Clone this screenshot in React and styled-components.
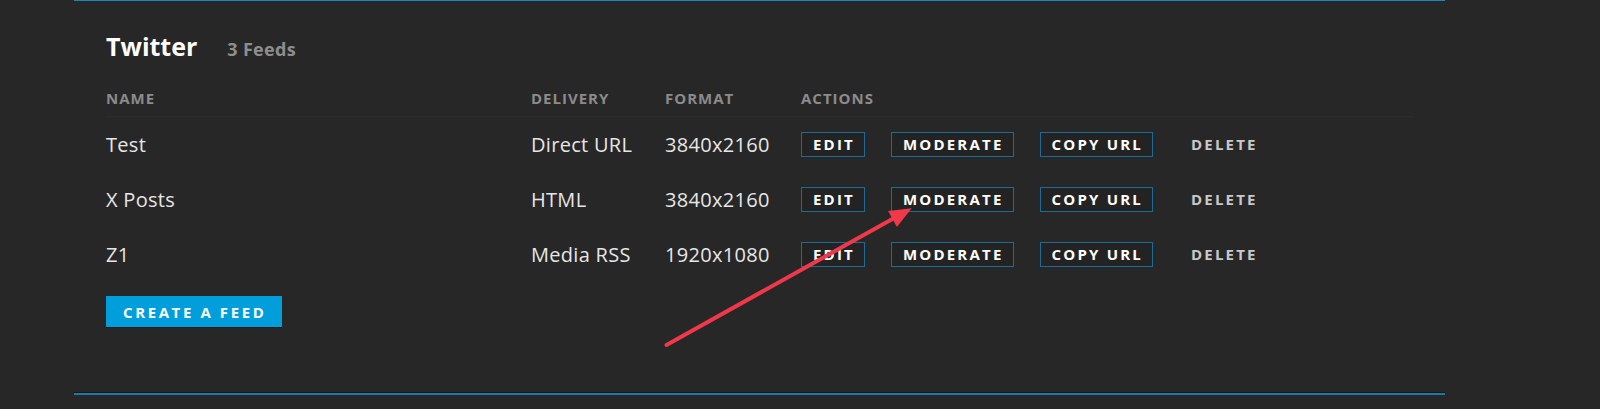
import React from 'react'
import styled, { createGlobalStyle } from 'styled-components'

const GlobalStyle = createGlobalStyle`
  html, body {
    margin: 0;
    padding: 0;
    background: #272727;
  }
  body {
    font-family: "Open Sans", "Liberation Sans", sans-serif;
    color: #e6e6e6;
  }
`

const feeds = [
  { name: 'Test', delivery: 'Direct URL', format: '3840x2160' },
  { name: 'X Posts', delivery: 'HTML', format: '3840x2160' },
  { name: 'Z1', delivery: 'Media RSS', format: '1920x1080' },
]

const Page = () => {
  return (
    <Wrapper>
      <GlobalStyle />
      <TopLine />
      <Panel>
        <TitleRow>
          <Title>Twitter</Title>
          <Count>{feeds.length} Feeds</Count>
        </TitleRow>

        <HeadRow>
          <HeadCell>Name</HeadCell>
          <HeadCell>Delivery</HeadCell>
          <HeadCell>Format</HeadCell>
          <HeadCell>Actions</HeadCell>
        </HeadRow>

        {feeds.map((feed) => (
          <FeedRow key={feed.name}>
            <Cell>{feed.name}</Cell>
            <Cell>{feed.delivery}</Cell>
            <Cell>{feed.format}</Cell>
            <Actions>
              <ActionButton>Edit</ActionButton>
              <ActionButton>Moderate</ActionButton>
              <ActionButton>Copy URL</ActionButton>
              <ActionButton plain>Delete</ActionButton>
            </Actions>
          </FeedRow>
        ))}

        <CreateButton>Create a feed</CreateButton>
      </Panel>

      {/* annotation arrow drawn over the screenshot */}
      <Arrow width="1600" height="409" viewBox="0 0 1600 409">
        <line x1="666.5" y1="345" x2="896" y2="217" stroke="#f0384b" strokeWidth="4" strokeLinecap="round" />
        <polygon points="911.7,208.3 888.1,211.1 896.9,226.9" fill="#f0384b" />
      </Arrow>
    </Wrapper>
  )
}

const Wrapper = styled.div`
  position: relative;
  width: 1600px;
  height: 409px;
  overflow: hidden;
`

const TopLine = styled.div`
  width: 1371px;
  height: 1px;
  margin-left: 74px;
  background: #1a84bd;
`

const Panel = styled.div`
  width: 1371px;
  margin-left: 74px;
  box-sizing: border-box;
  padding: 33px 32px 66px 32px;
  border-bottom: 2px solid #1d79aa;
  box-shadow: inset 0 -1px 0 #1b1714;
`

const TitleRow = styled.div`
  display: flex;
  align-items: baseline;
`

const Title = styled.h2`
  margin: 0;
  font-size: 25px;
  line-height: 24px;
  font-weight: 700;
  color: #ffffff;
`

const Count = styled.span`
  margin-left: 30px;
  font-size: 18px;
  line-height: 24px;
  font-weight: 700;
  color: #8e8e8e;
  letter-spacing: 0.3px;
`

const Grid = styled.div`
  display: grid;
  grid-template-columns: 425px 134px 136px 1fr;
  align-items: center;
`

const HeadRow = styled(Grid)`
  margin-top: 30px;
  padding-bottom: 10px;
  border-bottom: 1px solid #2d2d2d;
`

const HeadCell = styled.div`
  font-size: 15px;
  line-height: 15px;
  font-weight: 700;
  text-transform: uppercase;
  letter-spacing: 1px;
  color: #8b8b8b;
`

const FeedRow = styled(Grid)`
  height: 55px;
`

const Cell = styled.div`
  font-size: 20px;
  line-height: 20px;
  font-weight: 400;
  letter-spacing: 0.3px;
  color: #e6e6e6;
`

const Actions = styled.div`
  display: flex;
  align-items: center;
  gap: 26px;
`

const ActionButton = styled.button`
  height: 25px;
  box-sizing: border-box;
  padding: 0 9px 0 11px;
  border: 1px solid ${(props) => (props.plain ? 'transparent' : '#1a6d99')};
  background: ${(props) => (props.plain ? 'transparent' : '#232323')};
  color: ${(props) => (props.plain ? '#c9c9c9' : '#ffffff')};
  font-family: "Open Sans", "Liberation Sans", sans-serif;
  font-size: 15px;
  line-height: 23px;
  font-weight: 700;
  letter-spacing: 2.2px;
  text-transform: uppercase;
  cursor: pointer;
`

const CreateButton = styled.button`
  display: block;
  margin-top: 14px;
  height: 31px;
  padding: 0 16px 0 17px;
  border: none;
  background: #009edb;
  box-shadow: 0 1px 0 #1a1a1a;
  color: #ffffff;
  font-family: "Open Sans", "Liberation Sans", sans-serif;
  font-size: 15px;
  font-weight: 700;
  letter-spacing: 2.6px;
  text-transform: uppercase;
  cursor: pointer;
`

const Arrow = styled.svg`
  position: absolute;
  left: 0;
  top: 0;
  pointer-events: none;
`

export default Page
